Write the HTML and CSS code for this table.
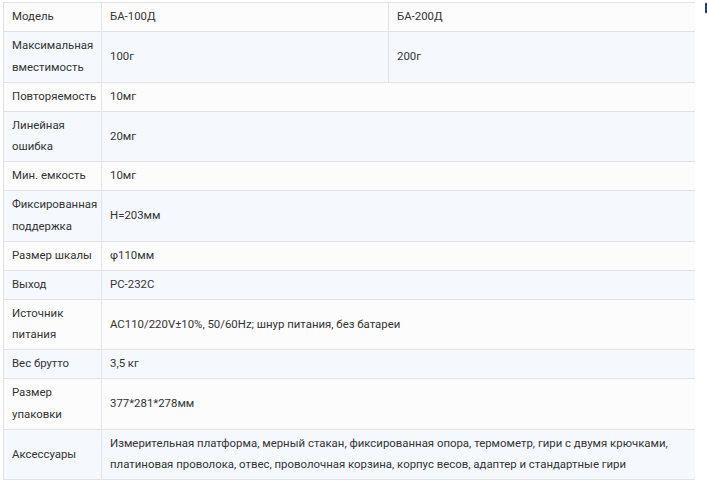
FILE: index.html
```html
<!DOCTYPE html>
<html lang="ru">
<head>
    <meta charset="UTF-8">
    <meta name="viewport" content="width=device-width, initial-scale=1.0">
    <title>Характеристики</title>
    <link rel="stylesheet" href="styles.css">
</head>
<body>
    <div class="page">
        <table class="specs">
            <colgroup>
                <col class="col-name">
                <col class="col-a">
                <col class="col-b">
            </colgroup>
            <tr>
                <td>Модель</td>
                <td>БА-100Д</td>
                <td>БА-200Д</td>
            </tr>
            <tr>
                <td>Максимальная вместимость</td>
                <td>100г</td>
                <td>200г</td>
            </tr>
            <tr>
                <td>Повторяемость</td>
                <td colspan="2">10мг</td>
            </tr>
            <tr>
                <td>Линейная ошибка</td>
                <td colspan="2">20мг</td>
            </tr>
            <tr>
                <td>Мин. емкость</td>
                <td colspan="2">10мг</td>
            </tr>
            <tr>
                <td>Фиксированная поддержка</td>
                <td colspan="2">H=203мм</td>
            </tr>
            <tr>
                <td>Размер шкалы</td>
                <td colspan="2">φ110мм</td>
            </tr>
            <tr>
                <td>Выход</td>
                <td colspan="2">PC-232C</td>
            </tr>
            <tr>
                <td>Источник питания</td>
                <td colspan="2">AC110/220V±10%, 50/60Hz; шнур питания, без батареи</td>
            </tr>
            <tr>
                <td>Вес брутто</td>
                <td colspan="2">3,5 кг</td>
            </tr>
            <tr>
                <td>Размер упаковки</td>
                <td colspan="2">377*281*278мм</td>
            </tr>
            <tr>
                <td>Аксессуары</td>
                <td colspan="2">Измерительная платформа, мерный стакан, фиксированная опора, термометр, гири с двумя крючками, платиновая проволока, отвес, проволочная корзина, корпус весов, адаптер и стандартные гири</td>
            </tr>
        </table>
    </div>
    <div class="side-mark"></div>
</body>
</html>
```

FILE: styles.css
```css
body {
    margin: 0;
    background: #fff;
    color: #333;
    font-family: Roboto, "Liberation Sans", Arial, sans-serif;
    font-size: 11.4px;
}
.page {
    padding: 2px 0 0 3px;
    width: 691px;
}
.specs {
    width: 691px;
    border-collapse: collapse;
    table-layout: fixed;
}
.col-name { width: 98px; }
.col-a { width: 287px; }
.col-b { width: 306px; }
.specs td {
    border: 1px solid #e2e2e2;
    padding: 3.25px 4px 3.25px 8px;
    line-height: 21.5px;
    vertical-align: middle;
    text-align: left;
}
.specs td:last-child {
    border-right: none;
}
.specs tr:nth-child(odd) td { background: #fcfcfc; }
.specs tr:nth-child(even) td { background: #f5f9fe; }
.side-mark {
    position: fixed;
    top: 3px;
    right: 0;
    width: 2px;
    height: 10px;
    background: #1d3e8e;
}
```
